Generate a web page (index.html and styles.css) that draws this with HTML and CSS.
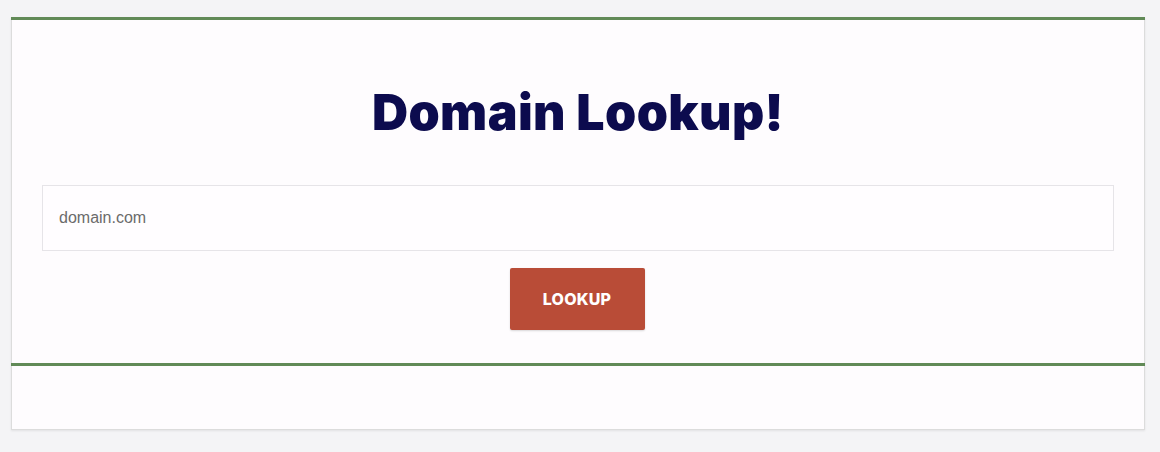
FILE: index.html
```html
<!DOCTYPE html>
<html>
<head>
<meta charset="utf-8">
<link rel="stylesheet" href="styles.css">
</head>
<body>
<div class="card">
  <div class="rule"></div>
  <div class="content">
    <h1 class="title">Domain Lookup!</h1>
    <div class="field">domain.com</div>
    <div class="actions"><button class="btn">LOOKUP</button></div>
  </div>
  <div class="rule"></div>
  <div class="footer"></div>
</div>
</body>
</html>
```
FILE: styles.css
```css
html, body { margin: 0; padding: 0; }
body {
  background: #f4f4f6;
  font-family: "Liberation Sans", Arial, sans-serif;
  padding: 17px 15px 0 11px;
  height: 452px;
  box-sizing: border-box;
}
.card {
  background: #fefcfe;
  border: 1px solid #dcdcdc;
  border-top: none;
  box-shadow: 0 1px 2px rgba(0,0,0,0.08);
  height: 413px;
  box-sizing: border-box;
  display: flex;
  flex-direction: column;
}
.rule {
  height: 3px;
  background: #618a57;
  margin: 0 -1px;
}
.content {
  padding: 0 30px;
  height: 343px;
  display: flex;
  flex-direction: column;
  align-items: center;
}
.title {
  margin: 63px 0 0;
  font-family: Inter, sans-serif;
  font-weight: 900;
  font-size: 50px;
  line-height: 58px;
  color: #0c0b4e;
  letter-spacing: 0.4px;
}
.field {
  margin-top: 44px;
  align-self: stretch;
  height: 66px;
  box-sizing: border-box;
  border: 1px solid #e6e4e8;
  background: #fffdff;
  padding-left: 16px;
  display: flex;
  align-items: center;
  font-size: 16px;
  color: #6b6b6b;
}
.actions { margin-top: 17px; margin-right: 2px; }
.btn {
  width: 135px;
  height: 62px;
  background: #b94c37;
  border: none;
  border-radius: 2px;
  color: #fff;
  font-family: Inter, sans-serif;
  font-weight: 800;
  font-size: 16px;
  letter-spacing: 0.2px;
  box-shadow: 0 1px 2px rgba(0,0,0,0.15);
}
.footer { flex: 1; }
```
